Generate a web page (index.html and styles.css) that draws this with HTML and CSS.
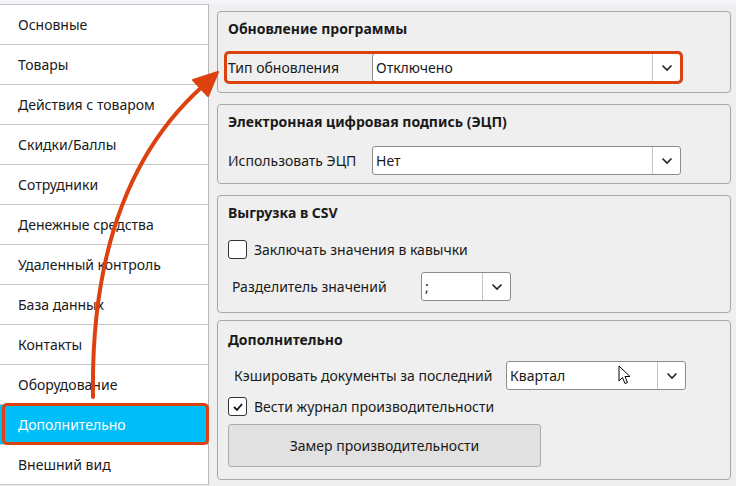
FILE: index.html
```html
<!DOCTYPE html>
<html lang="ru">
<head>
  <meta charset="UTF-8">
  <title>Настройки</title>
  <link rel="stylesheet" href="styles.css">
</head>
<body>
  <div class="topline"></div>
  <div class="window">
    <ul class="menu">
      <li>Основные</li>
      <li>Товары</li>
      <li>Действия с товаром</li>
      <li>Скидки/Баллы</li>
      <li>Сотрудники</li>
      <li>Денежные средства</li>
      <li>Удаленный контроль</li>
      <li>База данных</li>
      <li>Контакты</li>
      <li>Оборудование</li>
      <li class="active">Дополнительно</li>
      <li>Внешний вид</li>
    </ul>

    <div class="panel">
      <div class="group g-update">
        <div class="group-title">Обновление программы</div>
        <div class="row marked">
          <span class="label">Тип обновления</span>
          <div class="combo wide">
            <span class="value">Отключено</span>
            <span class="drop"><svg width="12" height="8" viewBox="0 0 12 8"><path d="M1.5 1.5 L6 6 L10.5 1.5" fill="none" stroke="#222" stroke-width="1.6"/></svg></span>
          </div>
        </div>
      </div>

      <div class="group g-sign">
        <div class="group-title">Электронная цифровая подпись (ЭЦП)</div>
        <div class="row">
          <span class="label">Использовать ЭЦП</span>
          <div class="combo wide">
            <span class="value">Нет</span>
            <span class="drop"><svg width="12" height="8" viewBox="0 0 12 8"><path d="M1.5 1.5 L6 6 L10.5 1.5" fill="none" stroke="#222" stroke-width="1.6"/></svg></span>
          </div>
        </div>
      </div>

      <div class="group g-csv">
        <div class="group-title">Выгрузка в CSV</div>
        <label class="check">
          <span class="box"></span>
          <span>Заключать значения в кавычки</span>
        </label>
        <div class="row sep-row">
          <span class="label">Разделитель значений</span>
          <div class="combo small">
            <span class="value">;</span>
            <span class="drop"><svg width="12" height="8" viewBox="0 0 12 8"><path d="M1.5 1.5 L6 6 L10.5 1.5" fill="none" stroke="#222" stroke-width="1.6"/></svg></span>
          </div>
        </div>
      </div>

      <div class="group g-extra">
        <div class="group-title">Дополнительно</div>
        <div class="row cache-row">
          <span class="label">Кэшировать документы за последний</span>
          <div class="combo mid">
            <span class="value">Квартал</span>
            <span class="drop"><svg width="12" height="8" viewBox="0 0 12 8"><path d="M1.5 1.5 L6 6 L10.5 1.5" fill="none" stroke="#222" stroke-width="1.6"/></svg></span>
            <svg class="cursor" width="14" height="21" viewBox="0 0 14 21"><path d="M1 1 L1 16 L4.5 12.5 L7 18.5 L9.5 17.5 L7 11.5 L12 11.5 Z" fill="#fff" stroke="#000" stroke-width="1" stroke-linejoin="round"/></svg>
          </div>
        </div>
        <label class="check">
          <span class="box checked"><svg width="12" height="10" viewBox="0 0 12 10"><path d="M2 5 L5 8 L10 2" fill="none" stroke="#111" stroke-width="1.8"/></svg></span>
          <span>Вести журнал производительности</span>
        </label>
        <button class="btn">Замер производительности</button>
      </div>
    </div>
  </div>

  <svg class="pointer-arrow" width="736" height="486" viewBox="0 0 736 486">
    <path d="M93 397 C 91 270 120 160 203 86" fill="none" stroke="#dc420f" stroke-width="4" stroke-linecap="round"/>
    <path d="M218 72 L193 80 L208 96 Z" fill="#dc420f" stroke="#dc420f" stroke-width="2" stroke-linejoin="round"/>
  </svg>
</body>
</html>
```

FILE: styles.css
```css
body {
  margin: 0;
  font-family: "Noto Sans", "Open Sans", sans-serif;
  font-size: 14px;
  color: #1a1a1a;
  background-color: #efefef;
  width: 736px;
  height: 486px;
  overflow: hidden;
  position: relative;
}
.topline {
  height: 4px;
  background: #f4f4f8;
}
.window {
  display: flex;
}
.menu {
  list-style: none;
  margin: 0;
  padding: 0;
  width: 208px;
  background: #fff;
  border-right: 1px solid #b9b9b9;
  border-top: 1px solid #c6c6c6;
}
.menu li {
  height: 39px;
  line-height: 39px;
  padding-left: 18px;
  border-bottom: 1px solid #c6c6c6;
  position: relative;
}
.menu li.active {
  background: #00bef7;
  color: #fff;
}
.menu li.active::after {
  content: "";
  position: absolute;
  left: 2px;
  right: -1px;
  top: -2px;
  bottom: -1px;
  border: 3px solid #dc420f;
  border-radius: 5px;
}
.panel {
  flex: 1;
  padding: 7px 5px 0 8px;
}
.group {
  border: 1px solid #a8a8a8;
  border-radius: 4px;
  padding: 8px 10px 0 10px;
  box-sizing: border-box;
}
.group-title {
  font-weight: bold;
  line-height: 18px;
}
.g-update {
  height: 82px;
}
.g-sign {
  height: 80px;
  margin-top: 11px;
}
.g-csv {
  height: 118px;
  margin-top: 11px;
}
.g-extra {
  height: 160px;
  margin-top: 7px;
  padding-top: 10px;
}
.row {
  display: flex;
  align-items: center;
  margin-top: 15px;
  position: relative;
}
.row.marked {
  width: fit-content;
}
.row.marked::after {
  content: "";
  position: absolute;
  left: -4px;
  right: -2px;
  top: -2px;
  bottom: -2px;
  border: 3px solid #dc420f;
  border-radius: 5px;
}
.label {
  width: 144px;
  flex: none;
}
.combo {
  display: flex;
  height: 29px;
  box-sizing: border-box;
  background: #fff;
  border: 1px solid #8c8c8c;
  border-radius: 3px;
  position: relative;
}
.combo .value {
  flex: 1;
  line-height: 27px;
  padding-left: 3px;
}
.combo .drop {
  width: 27px;
  border-left: 1px solid #c4c4c4;
  display: flex;
  align-items: center;
  justify-content: center;
}
.combo.wide {
  width: 309px;
}
.combo.small {
  width: 90px;
}
.combo.mid {
  width: 180px;
}
.check {
  display: flex;
  align-items: center;
  gap: 7px;
  margin-top: 18px;
}
.box {
  width: 17px;
  height: 17px;
  border: 1px solid #333;
  border-radius: 3px;
  background: #fff;
  display: flex;
  align-items: center;
  justify-content: center;
}
.sep-row {
  margin-top: 13px;
  padding-left: 4px;
}
.sep-row .label {
  width: 189px;
}
.cache-row {
  margin-top: 12px;
  padding-left: 6px;
}
.cache-row .label {
  width: 272px;
}
.g-extra .check {
  margin-top: 7px;
}
.btn {
  display: block;
  width: 313px;
  height: 43px;
  margin-top: 8px;
  background: #e1e1e1;
  border: 1px solid #adadad;
  border-radius: 3px;
  font-family: inherit;
  font-size: 14px;
  color: #1a1a1a;
}
.cursor {
  position: absolute;
  left: 111px;
  top: 3px;
}
.pointer-arrow {
  position: absolute;
  left: 0;
  top: 0;
  pointer-events: none;
}
```
